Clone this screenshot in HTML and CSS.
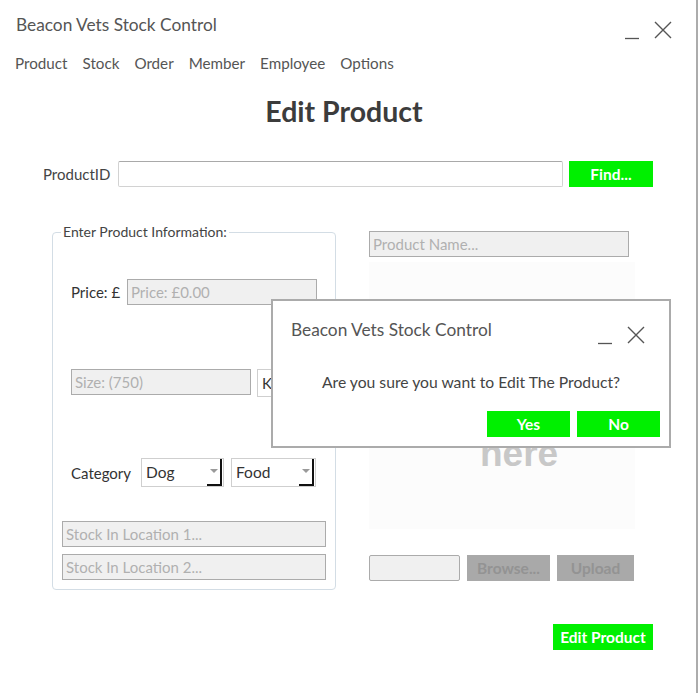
FILE: index.html
```html
<!DOCTYPE html>
<html>
<head>
<meta charset="utf-8">
<link rel="stylesheet" href="styles.css">
</head>
<body>
<div class="window">
  <div class="titlebar">
    <div class="title">Beacon Vets Stock Control</div>
    <div class="controls">
      <svg class="ctl-min" width="16" height="18" viewBox="0 0 16 18"><line x1="1" y1="16.5" x2="15" y2="16.5" stroke="#555" stroke-width="1.3"/></svg>
      <svg class="ctl-close" width="18" height="18" viewBox="0 0 18 18"><path d="M1 1 L17 17 M17 1 L1 17" stroke="#555" stroke-width="1.4" fill="none"/></svg>
    </div>
  </div>
  <nav class="menu">
    <span>Product</span><span>Stock</span><span>Order</span><span>Member</span><span>Employee</span><span>Options</span>
  </nav>
  <h1 class="heading">Edit Product</h1>
  <div class="main">
    <div class="id-row">
      <label class="id-label">ProductID</label>
      <div class="id-input"></div>
      <button class="btn green find">Find...</button>
    </div>
    <div class="columns">
      <fieldset class="group">
        <legend>Enter Product Information:</legend>
        <div class="row price-row">
          <span class="lbl price-lbl">Price: £</span>
          <div class="tb price">Price: £0.00</div>
        </div>
        <div class="row size-row">
          <div class="tb size">Size: (750)</div>
          <div class="unit">Kg</div>
        </div>
        <div class="row cat-row">
          <span class="lbl cat-lbl">Category</span>
          <div class="sel dog"><span class="sel-text">Dog</span><span class="sel-btn"><i></i></span></div>
          <div class="sel food"><span class="sel-text">Food</span><span class="sel-btn"><i></i></span></div>
        </div>
        <div class="tb stock stock1">Stock In Location 1...</div>
        <div class="tb stock stock2">Stock In Location 2...</div>
      </fieldset>
      <div class="right">
        <div class="tb pname">Product Name...</div>
        <div class="image-area">
          <div class="img-text">here</div>
        </div>
        <div class="upload-row">
          <div class="tb file"></div>
          <button class="btn grey browse">Browse...</button>
          <button class="btn grey upload">Upload</button>
        </div>
      </div>
    </div>
    <div class="bottom">
      <button class="btn green edit">Edit Product</button>
    </div>
  </div>

  <div class="dialog">
    <div class="dlg-titlebar">
      <div class="dlg-title">Beacon Vets Stock Control</div>
      <div class="controls dlg-controls">
        <svg class="ctl-min" width="16" height="18" viewBox="0 0 16 18"><line x1="1" y1="16.5" x2="15" y2="16.5" stroke="#555" stroke-width="1.3"/></svg>
        <svg class="ctl-close" width="18" height="18" viewBox="0 0 18 18"><path d="M1 1 L17 17 M17 1 L1 17" stroke="#555" stroke-width="1.4" fill="none"/></svg>
      </div>
    </div>
    <div class="dlg-msg">Are you sure you want to Edit The Product?</div>
    <div class="dlg-buttons">
      <button class="btn green dlg-btn">Yes</button>
      <button class="btn green dlg-btn">No</button>
    </div>
  </div>
</div>
</body>
</html>
```
FILE: styles.css
```css
* { box-sizing: border-box; }
html, body { margin: 0; padding: 0; background: #fff; }
body { font-family: Lato, "Open Sans", sans-serif; color: #444; }

.window {
  position: relative;
  width: 698px;
  height: 693px;
  border-right: 2px solid #acacac;
  overflow: hidden;
}

.titlebar {
  display: flex;
  justify-content: space-between;
  height: 51px;
  padding: 13px 24px 0 16px;
}
.title { font-size: 17.3px; line-height: 24px; color: #555; }
.controls { display: flex; align-items: flex-start; gap: 14px; padding-top: 8px; }
.ctl-min { margin-top: 1px; }

.menu {
  display: flex;
  gap: 15px;
  padding-left: 15px;
  font-size: 15.2px;
  line-height: 24px;
  color: #555;
}

.heading {
  margin: 18px 0 0 0;
  text-align: center;
  font-size: 28.5px;
  line-height: 36px;
  font-weight: bold;
  color: #3c3c3c;
  padding-right: 8px;
}

.main { margin-left: 43px; width: 610px; }

.id-row {
  display: flex;
  align-items: center;
  margin-top: 32px;
  height: 26px;
}
.id-label { width: 75px; font-size: 15px; color: #444; }
.id-input {
  width: 445px;
  height: 26px;
  border: 1px solid #d2d2d2;
  border-top-color: #a9a9a9;
  border-radius: 2px;
  background: #fff;
}
.btn {
  font-family: Lato, "Open Sans", sans-serif;
  font-weight: bold;
  font-size: 15.5px;
  border: none;
  padding: 0;
  height: 26px;
}
.green { background: #00f000; color: #fff; }
.grey { background: #a9a9a9; color: #939393; }
.find { margin-left: 6px; width: 84px; }

.columns {
  display: grid;
  grid-template-columns: 284px 266px;
  column-gap: 33px;
  margin-top: 36px;
  margin-left: 9px;
}

.group {
  margin: 0;
  padding: 0 9px 9px 9px;
  border: 1px solid #d3dde5;
  border-radius: 4px;
  min-width: 0;
}
.group legend {
  margin-left: -1px;
  padding: 0 2px;
  font-size: 14px;
  line-height: 18px;
  color: #444;
}

.row { display: flex; align-items: center; padding-left: 9px; }
.lbl { font-size: 15px; color: #333; }
.price-lbl { width: 56px; }
.cat-lbl { width: 70px; }

.tb {
  height: 26px;
  border: 1px solid #ababab;
  background: #f0f0f0;
  color: #b0b0b0;
  font-size: 15px;
  line-height: 24px;
  padding-left: 3px;
  white-space: nowrap;
  overflow: hidden;
}

.price-row { margin-top: 38px; }
.price { width: 190px; }

.size-row { margin-top: 64px; align-items: flex-start; }
.size { width: 180px; }
.unit {
  margin-left: 6px;
  width: 60px;
  height: 28px;
  border: 1px solid #cfcfcf;
  font-size: 15px;
  line-height: 26px;
  padding-left: 4px;
  color: #333;
}

.cat-row { margin-top: 61px; }
.sel {
  display: flex;
  height: 29px;
  border: 1px solid #cfcfcf;
  padding: 0 1px 0 0;
  background: #fff;
}
.dog { width: 83px; }
.food { width: 85px; margin-left: 7px; }
.sel-text { flex: 1; font-size: 15.5px; line-height: 27px; padding-left: 4px; color: #333; }
.sel-btn {
  width: 15px;
  border-right: 2px solid #111;
  border-bottom: 2px solid #111;
  display: flex;
  align-items: center;
  justify-content: center;
}
.sel-btn i {
  width: 0; height: 0;
  border-left: 4px solid transparent;
  border-right: 4px solid transparent;
  border-top: 4px solid #9a9a9a;
  margin-top: -2px;
}

.stock { width: 264px; }
.stock1 { margin-top: 34px; }
.stock2 { margin-top: 7px; }

.right { display: flex; flex-direction: column; padding-top: 8px; }
.pname { width: 260px; height: 26px; }
.image-area {
  margin-top: 5px;
  height: 267px;
  background: #fcfcfc;
}
.img-text {
  padding: 177px 0 0 111px;
  font-family: "Liberation Sans", Arial, sans-serif;
  font-weight: bold;
  font-size: 37px;
  line-height: 30px;
  color: #c8c8c8;
}
.upload-row { display: flex; gap: 7px; margin-top: 26px; }
.file { width: 91px; border-radius: 2px; }
.browse { width: 83px; }
.upload { width: 77px; }

.bottom { display: flex; justify-content: flex-end; margin-top: 34px; }
.edit { width: 100px; font-size: 15.5px; }

.dialog {
  position: absolute;
  left: 271px;
  top: 299px;
  width: 400px;
  height: 149px;
  border: 2px solid #ababab;
  background: #fff;
}
.dlg-titlebar {
  display: flex;
  justify-content: space-between;
  padding: 18px 24px 0 18px;
  height: 44px;
}
.dlg-title { font-size: 17.3px; line-height: 22px; color: #555; }
.dlg-controls { padding-top: 7px; gap: 14px; }
.dlg-msg {
  margin-top: 26px;
  text-align: center;
  font-size: 15.7px;
  line-height: 22px;
  color: #444;
}
.dlg-buttons {
  display: flex;
  justify-content: flex-end;
  gap: 7px;
  margin-top: 18px;
  padding-right: 9px;
}
.dlg-btn { width: 83px; font-size: 15.5px; }
```
